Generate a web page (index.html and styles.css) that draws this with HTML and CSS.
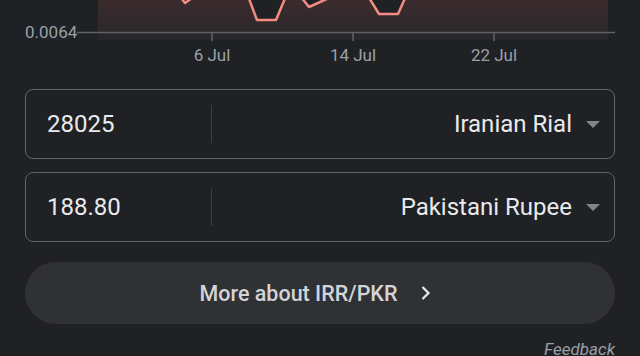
FILE: index.html
```html
<!DOCTYPE html>
<html lang="en">
<head>
    <meta charset="UTF-8">
    <meta name="viewport" content="width=device-width, initial-scale=1.0">
    <title>IRR to PKR</title>
    <link rel="stylesheet" href="styles.css">
</head>
<body>
    <div class="chart">
        <svg width="640" height="76" viewBox="0 0 640 76">
            <defs>
                <linearGradient id="areaFill" x1="0" y1="0" x2="0" y2="1">
                    <stop offset="0" stop-color="#3b2b2d"/>
                    <stop offset="1" stop-color="#28262a"/>
                </linearGradient>
            </defs>
            <path d="M98,0 L182,0 L185,3 L191,0 L250,0 L257,20 L276,20 L284,0 L303,0 L309,7 L326,0 L370,0 L379,14 L398,14 L404,0 L608,0 L608,40 L98,40 Z" fill="url(#areaFill)"/>
            <path d="M182,-1 L185,3 L192,-2 M248,-4 L257,20 L276,20 L286,-4 M301,-3 L309,7 L329,-2 M368,-4 L379,14 L398,14 L406,-4" fill="none" stroke="#f28b82" stroke-width="2.5" stroke-linejoin="round"/>
            <line x1="77" y1="32.5" x2="615" y2="32.5" stroke="#5f6368" stroke-width="1.5"/>
            <line x1="212" y1="33" x2="212" y2="41" stroke="#5f6368" stroke-width="1.5"/>
            <line x1="353" y1="33" x2="353" y2="41" stroke="#5f6368" stroke-width="1.5"/>
            <line x1="494" y1="33" x2="494" y2="41" stroke="#5f6368" stroke-width="1.5"/>
            <text class="axis-label" x="25" y="38">0.0064</text>
            <text class="axis-label" x="212" y="61" text-anchor="middle">6 Jul</text>
            <text class="axis-label" x="353" y="61" text-anchor="middle">14 Jul</text>
            <text class="axis-label" x="494" y="61" text-anchor="middle">22 Jul</text>
        </svg>
    </div>

    <div class="converter">
        <div class="field">
            <div class="amount">28025</div>
            <div class="currency">
                <span>Iranian Rial</span>
                <span class="caret"></span>
            </div>
        </div>
        <div class="field">
            <div class="amount">188.80</div>
            <div class="currency">
                <span>Pakistani Rupee</span>
                <span class="caret"></span>
            </div>
        </div>

        <button class="more">
            More about IRR/PKR
            <svg width="12" height="16" viewBox="0 0 12 16"><path d="M2.5,2 L8.5,8 L2.5,14" fill="none" stroke="#e8eaed" stroke-width="2.2"/></svg>
        </button>

        <div class="feedback">Feedback</div>
    </div>
</body>
</html>
```

FILE: styles.css
```css
body, html {
    margin: 0;
    padding: 0;
    background-color: #202124;
    color: #e8eaed;
    font-family: Roboto, "Liberation Sans", sans-serif;
    overflow: hidden;
}

.chart {
    height: 76px;
}

.chart svg {
    display: block;
}

.axis-label {
    fill: #9aa0a6;
    font-family: Roboto, "Liberation Sans", sans-serif;
    font-size: 17px;
}

.converter {
    padding: 13px 25px 0;
    display: flex;
    flex-direction: column;
}

.field {
    display: flex;
    align-items: center;
    height: 68px;
    border: 1px solid #5f6368;
    border-radius: 8px;
    margin-bottom: 13px;
}

.amount {
    width: 164px;
    padding-left: 21px;
    font-size: 24px;
    border-right: 1px solid #3c4043;
    line-height: 38px;
}

.currency {
    flex: 1;
    display: flex;
    justify-content: flex-end;
    align-items: center;
    font-size: 24px;
    padding-right: 14px;
}

.caret {
    width: 0;
    height: 0;
    margin-left: 14px;
    border-left: 7px solid transparent;
    border-right: 7px solid transparent;
    border-top: 7px solid #80868b;
}

.more {
    margin-top: 7px;
    height: 62px;
    border: none;
    border-radius: 31px;
    background-color: #303134;
    color: #d2d4d8;
    font-family: Roboto, "Liberation Sans", sans-serif;
    font-size: 21.5px;
    font-weight: 500;
    display: flex;
    align-items: center;
    justify-content: center;
    gap: 23px;
    padding: 0 8px 0 0;
}

.more svg {
    display: block;
}

.feedback {
    margin-top: 15px;
    text-align: right;
    font-style: italic;
    font-size: 17px;
    color: #9aa0a6;
}
```
